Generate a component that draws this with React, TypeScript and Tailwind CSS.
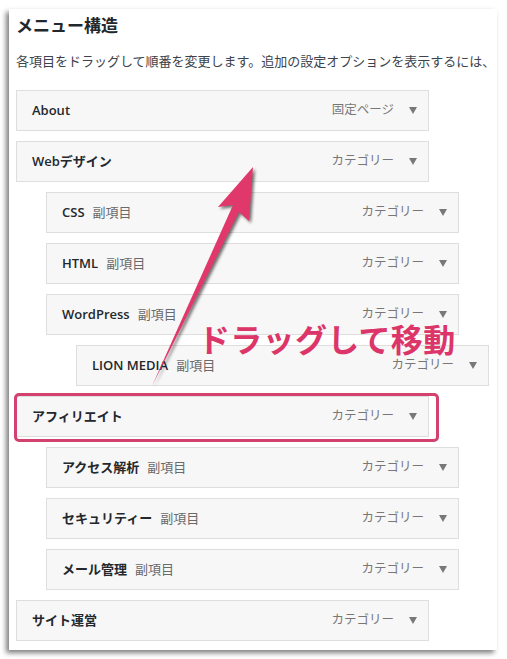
import React from "react";

const FONT = { fontFamily: '"Open Sans", "Noto Sans CJK JP", sans-serif' };

type Row = { label: string; sub?: boolean; type: string; indent: 0 | 1 | 2; highlight?: boolean };

const rows: Row[] = [
  { label: "About", type: "固定ページ", indent: 0 },
  { label: "Webデザイン", type: "カテゴリー", indent: 0 },
  { label: "CSS", sub: true, type: "カテゴリー", indent: 1 },
  { label: "HTML", sub: true, type: "カテゴリー", indent: 1 },
  { label: "WordPress", sub: true, type: "カテゴリー", indent: 1 },
  { label: "LION MEDIA", sub: true, type: "カテゴリー", indent: 2 },
  { label: "アフィリエイト", type: "カテゴリー", indent: 0, highlight: true },
  { label: "アクセス解析", sub: true, type: "カテゴリー", indent: 1 },
  { label: "セキュリティー", sub: true, type: "カテゴリー", indent: 1 },
  { label: "メール管理", sub: true, type: "カテゴリー", indent: 1 },
  { label: "サイト運営", type: "カテゴリー", indent: 0 },
];

function Caret() {
  return (
    <svg width="8" height="7" viewBox="0 0 8 7" className="shrink-0">
      <polygon points="0,0 8,0 4,7" fill="#787878" />
    </svg>
  );
}

function MenuRow({ r }: { r: Row }) {
  const indentClass = r.indent === 0 ? "ml-0" : r.indent === 1 ? "ml-[30px]" : "ml-[60px]";
  return (
    <div className={`relative ${indentClass}`}>
      {r.highlight && (
        <div className="absolute left-[-2px] top-[-3px] w-[425px] h-[49px] border-[3px] border-[#d3416f] rounded-[5px]" />
      )}
      <div className="w-[413px] h-[41px] border border-[#dedede] bg-[#f7f7f7] flex items-center pl-[15px] pr-[11px]">
        <span className="text-[13px] font-semibold text-[#23282d] leading-none">{r.label}</span>
        {r.sub && <span className="ml-[8px] text-[13px] text-[#6a6a6a] leading-none">副項目</span>}
        <span className="ml-auto text-[12.5px] text-[#777] leading-none">{r.type}</span>
        <span className="ml-[15px]">
          <Caret />
        </span>
      </div>
    </div>
  );
}

export default function App() {
  return (
    <div className="relative w-[507px] h-[659px] bg-white overflow-hidden pt-[9px] pl-[9px]" style={FONT}>
      <div className="w-[488px] h-[641px] bg-white shadow-[-3px_3px_5px_rgba(0,0,0,0.5)] pl-[7px] pt-[5px]">
        <h2 className="text-[17px] leading-[24px] font-bold text-[#23282d]">メニュー構造</h2>
        <p className="mt-[13px] text-[13px] leading-[20px] text-[#3c434a] whitespace-nowrap">
          各項目をドラッグして順番を変更します。追加の設定オプションを表示するには、
        </p>
        <div className="mt-[19px] flex flex-col gap-[10px]">
          {rows.map((r, i) => (
            <MenuRow key={i} r={r} />
          ))}
        </div>
      </div>

      <svg
        className="absolute left-0 top-0 pointer-events-none"
        width="507"
        height="659"
        viewBox="0 0 507 659"
        style={{ filter: "drop-shadow(2px 2px 1.5px rgba(0,0,0,0.55))" }}
      >
        <polygon
          points="253,167 249,221 239,212 152,386 233,205 218,207"
          fill="#e0386b"
        />
      </svg>

      <div
        className="absolute left-[198px] top-[318px] text-[32px] leading-[40px] font-bold text-[#dc3569] whitespace-nowrap tracking-[0.3px]"
        style={{ fontFamily: '"Noto Sans CJK JP", sans-serif' }}
      >
        ドラッグして移動
      </div>
    </div>
  );
}
